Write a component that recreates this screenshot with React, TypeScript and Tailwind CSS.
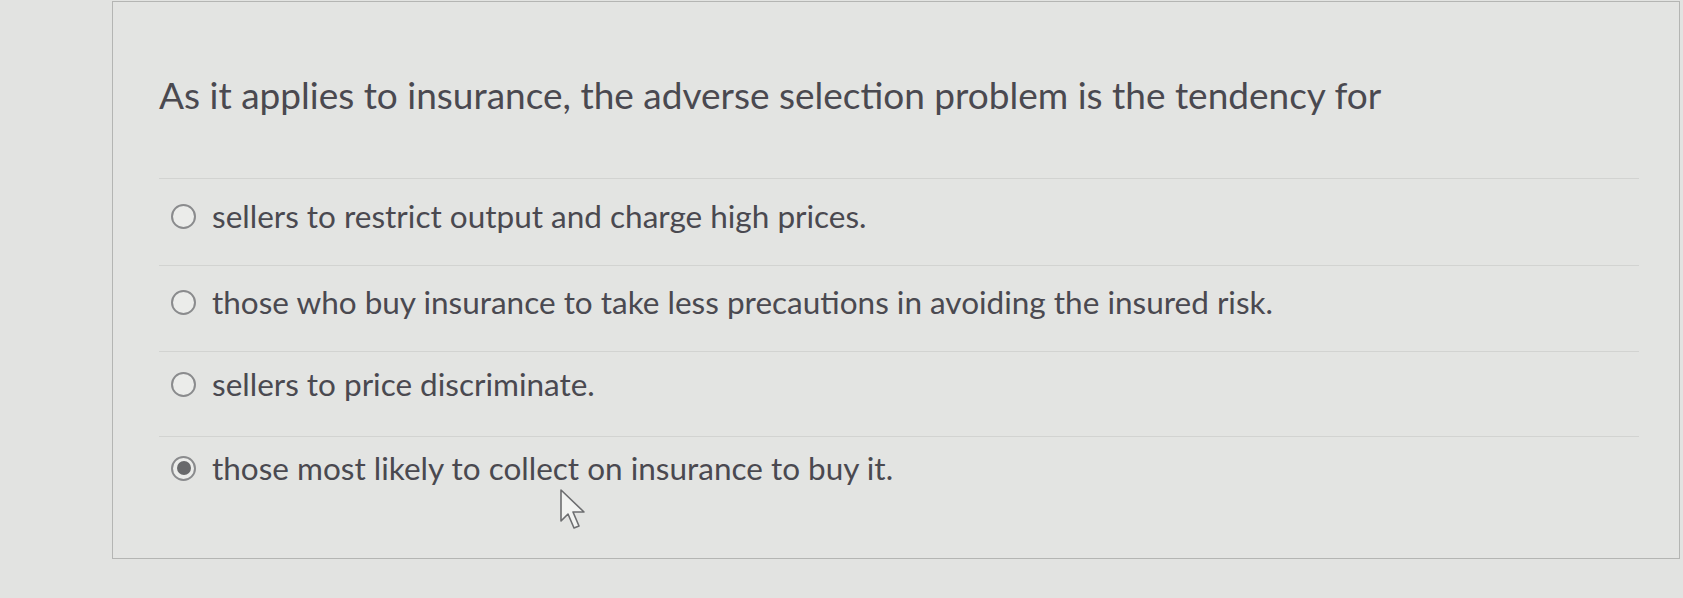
import React from 'react'

const options = [
  { text: 'sellers to restrict output and charge high prices.', row: 'h-[87px] pt-[18px]' },
  { text: 'those who buy insurance to take less precautions in avoiding the insured risk.', row: 'h-[86px] pt-[17px]' },
  { text: 'sellers to price discriminate.', row: 'h-[85px] pt-[13px]' },
  { text: 'those most likely to collect on insurance to buy it.', row: 'h-[85px] pt-[12px]' },
]

function Radio({ checked }: { checked: boolean }) {
  return (
    <span className="flex h-[25px] w-[25px] shrink-0 items-center justify-center rounded-full border-2 border-[#8a8b8d] bg-[#ebecea]">
      {checked && <span className="h-[14px] w-[14px] rounded-full bg-[#68696b]" />}
    </span>
  )
}

export default function App() {
  const selected = 3
  return (
    <div className="h-[598px] w-[1683px] overflow-hidden bg-[#e2e3e1] pt-[1px] pl-[112px] font-['Lato','Open_Sans',sans-serif]">
      <div className="relative h-[558px] w-[1568px] border border-[#b4b5b3] bg-[#e3e4e2] pr-[40px] pl-[46px]">
        <div className="flex h-[176px] items-start pt-[71px]">
          <h1 className="text-[37px] leading-[44px] text-[#4a4950]">
            As it applies to insurance, the adverse selection problem is the tendency for
          </h1>
        </div>
        {options.map((o, i) => (
          <div key={i} className={`flex items-start gap-[16px] border-t border-[#d2d3d1] pl-[12px] ${o.row}`}>
            <span className="flex h-[38px] items-center">
              <Radio checked={i === selected} />
            </span>
            <span className="text-[31.5px] leading-[38px] text-[#4a4950]">{o.text}</span>
          </div>
        ))}
        <svg
          className="absolute top-[486px] left-[446px]"
          width="30"
          height="44"
          viewBox="0 0 30 44"
        >
          <path
            d="M2 2 L2 33 L9 26 L15 40 L20 38 L14 24 L25 24 Z"
            fill="#f2f3f1"
            stroke="#6d6e70"
            strokeWidth="1.6"
            strokeLinejoin="round"
          />
        </svg>
      </div>
    </div>
  )
}
